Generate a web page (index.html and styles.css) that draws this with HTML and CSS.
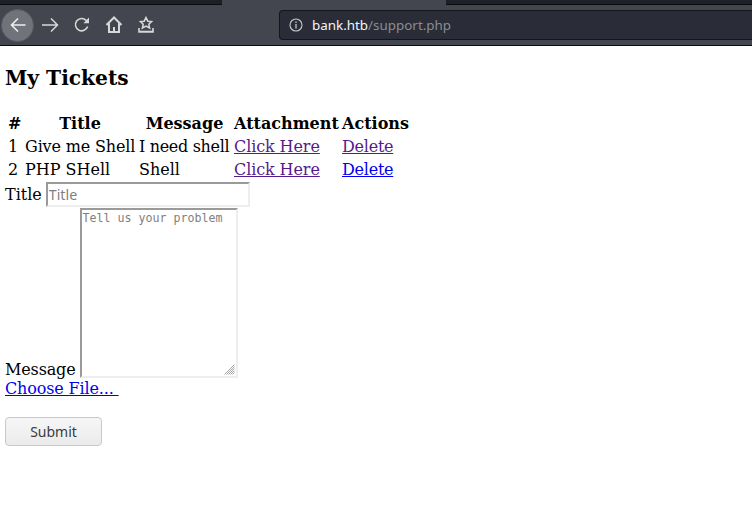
FILE: index.html
```html
<!DOCTYPE html>
<html lang="en">
<head>
<meta charset="utf-8">
<title>Support</title>
<link rel="stylesheet" href="styles.css">
</head>
<body>
<header class="browser">
  <div class="tabstrip">
    <div class="tab-dark tab-left"></div>
    <div class="tab-gap"></div>
    <div class="tab-dark tab-right"></div>
  </div>
  <div class="toolbar">
    <button class="nav back" aria-label="Back">
      <svg width="18" height="18" viewBox="0 0 18 18"><path d="M16.5 9H2.5M9 2.5L2.5 9L9 15.5" fill="none" stroke="currentColor" stroke-width="1.6"/></svg>
    </button>
    <button class="nav forward" aria-label="Forward">
      <svg width="18" height="18" viewBox="0 0 18 18"><path d="M1 9H16M10 2.5L16.5 9L10 15.5" fill="none" stroke="currentColor" stroke-width="1.5"/></svg>
    </button>
    <button class="nav reload" aria-label="Reload">
      <svg width="18" height="18" viewBox="0 0 18 18"><path d="M14.6 10.5A6.2 6.2 0 1 1 13 4.2L15 6" fill="none" stroke="currentColor" stroke-width="1.6"/><path d="M16 1.5V7.2H10.4z" fill="currentColor"/></svg>
    </button>
    <button class="nav home" aria-label="Home">
      <svg width="18" height="18" viewBox="0 0 18 18"><path d="M1.5 9L9 1.5L16.5 9M4 7.5V16H14V7.5" fill="none" stroke="currentColor" stroke-width="2"/><path d="M8 11H10V16H8z" fill="currentColor"/></svg>
    </button>
    <button class="nav library" aria-label="Library">
      <svg width="18" height="18" viewBox="0 0 18 18"><path d="M9 1.5L10.8 5.2L14.6 5.6L11.8 8.2L12.6 12L9 10.1L5.4 12L6.2 8.2L3.4 5.6L7.2 5.2z" fill="none" stroke="currentColor" stroke-width="1.5"/><path d="M2 12V16H16V12M2 15.5H16" fill="none" stroke="currentColor" stroke-width="1.6"/></svg>
    </button>
    <div class="urlbar">
      <svg class="info" width="14" height="14" viewBox="0 0 14 14"><circle cx="7" cy="7" r="6" fill="none" stroke="currentColor" stroke-width="1.1"/><path d="M7 6V10.5M7 3.4V5" fill="none" stroke="currentColor" stroke-width="1.3"/></svg>
      <span class="host">bank.htb</span><span class="path">/support.php</span>
    </div>
  </div>
</header>
<main class="page">
  <h3 class="heading">My Tickets</h3>
  <table class="tickets">
    <colgroup>
      <col class="col-num"><col class="col-title"><col class="col-message"><col class="col-attachment"><col class="col-actions">
    </colgroup>
    <thead>
      <tr><th>#</th><th>Title</th><th>Message</th><th>Attachment</th><th>Actions</th></tr>
    </thead>
    <tbody>
      <tr><td class="num">1</td><td class="tight-a">Give me Shell</td><td class="tight-b">I need shell</td><td class="tight-c"><a class="visited" href="#a">Click Here</a></td><td class="tight-d"><a class="visited" href="#b">Delete</a></td></tr>
      <tr><td class="num">2</td><td>PHP SHell</td><td>Shell</td><td class="tight-c"><a class="visited" href="#c">Click Here</a></td><td class="tight-d"><a href="#d">Delete</a></td></tr>
    </tbody>
  </table>
  <form class="ticket-form" onsubmit="return false">
    <div class="title-row">
      <label for="title">Title</label>
      <input id="title" class="title-input" type="text" placeholder="Title">
    </div>
    <div class="message-row">
      <label class="message-label" for="msg">Message</label>
      <div class="message-box">
        <textarea id="msg" class="message-input" placeholder="Tell us your problem"></textarea>
        <svg class="grip" width="11" height="11" viewBox="0 0 11 11"><path d="M.5 10.5L10.5 .5M2.5 10.5L10.5 2.5M4.5 10.5L10.5 4.5M6.5 10.5L10.5 6.5M8.5 10.5L10.5 8.5" fill="none" stroke="#8f8f8f" stroke-width=".8"/></svg>
      </div>
    </div>
    <div class="file-row"><a href="#f">Choose File...&nbsp;</a></div>
    <button class="submit" type="submit">Submit</button>
  </form>
</main>
</body>
</html>
```
FILE: styles.css
```css
* { box-sizing: border-box; }
html, body { margin: 0; padding: 0; background: #fff; }
body {
  height: 523px;
  overflow: hidden;
  font-family: "DejaVu Serif", serif;
  font-size: 16px;
  color: #000;
}
a { color: #0000ee; }
a.visited { color: #551a8b; }

.browser { height: 46px; background: #43464e; border-bottom: 1px solid #0c0c0d; }
.tabstrip { display: flex; height: 5px; }
.tab-dark { background: #1e2029; border-bottom: 1px solid #0c0c0d; height: 5px; }
.tab-left { width: 222px; }
.tab-gap { width: 224px; }
.tab-right { flex: 1; }
.toolbar { display: flex; align-items: center; height: 40px; padding-left: 1px; }
.nav {
  display: flex; align-items: center; justify-content: center;
  width: 32px; height: 32px; padding: 0; border: 0; border-radius: 50%;
  background: transparent; color: #d8d8da; flex: none;
}
.back { width: 33px; height: 33px; background: #70737a; color: #eeeeef; border: 1px solid #5a5d64; }
.urlbar {
  display: flex; align-items: center;
  margin-left: 117px; flex: 1; height: 30px;
  background: #2a2c37; border: 1px solid #15161c; border-right: 0;
  border-radius: 4px 0 0 4px;
  padding-left: 9px;
  font-family: "Noto Sans", "Open Sans", sans-serif;
  font-size: 13.4px;
  color: #f5f5f6;
}
.info { color: #c8c8cb; margin-right: 9px; }
.path { color: #8b8d94; }

.page { padding: 0 5px; }
.heading { margin: 0; padding-top: 20px; height: 65px; font-size: 20.2px; line-height: 24px; font-weight: bold; }
.tickets { table-layout: fixed; width: 407px; border-collapse: separate; border-spacing: 2px; margin: 0; white-space: nowrap; }
.col-num { width: 15px; }
.col-title { width: 112px; }
.col-message { width: 93px; }
.col-attachment { width: 106px; }
.col-actions { width: 69px; }
.tickets th, .tickets td { padding: 1px; }
.tickets td.num { text-align: left; }
.tickets th { text-align: center; }
.tight-a { letter-spacing: -0.15px; }
.tight-b { letter-spacing: -0.33px; }
.tight-c { letter-spacing: -0.1px; }
.tight-d { letter-spacing: -0.25px; }

.ticket-form { display: block; }
.title-row { height: 25px; display: flex; align-items: center; gap: 4px; }
.title-input {
  width: 204px; height: 25px; padding: 1px;
  border: 2px inset #eeeeee; background: #fff;
  font-family: "Noto Sans", sans-serif; font-size: 14.2px;
}
.message-row { display: flex; align-items: flex-end; gap: 4px; margin-top: 1px; }
.message-label { margin-bottom: -1px; letter-spacing: -0.14px; }
.message-box { position: relative; display: flex; }
.message-input {
  display: block; width: 158px; height: 170px; padding: 1px; resize: none;
  border: 2px inset #eeeeee; background: #fff;
  font-family: "DejaVu Sans Mono", monospace; font-size: 11.63px;
}
.grip { position: absolute; right: 3px; bottom: 3px; }
.title-input::placeholder, .message-input::placeholder { color: #808080; opacity: 1; }
.file-row { height: 39px; padding-top: 1px; letter-spacing: -0.14px; }
.submit {
  display: block; width: 97px; height: 29px; padding: 0;
  border: 1px solid #c8c8c8; border-radius: 4px;
  background: linear-gradient(#f6f6f6, #ebebeb);
  font-family: "Noto Sans", sans-serif; font-size: 14px; color: #3b3b3b;
}
```
